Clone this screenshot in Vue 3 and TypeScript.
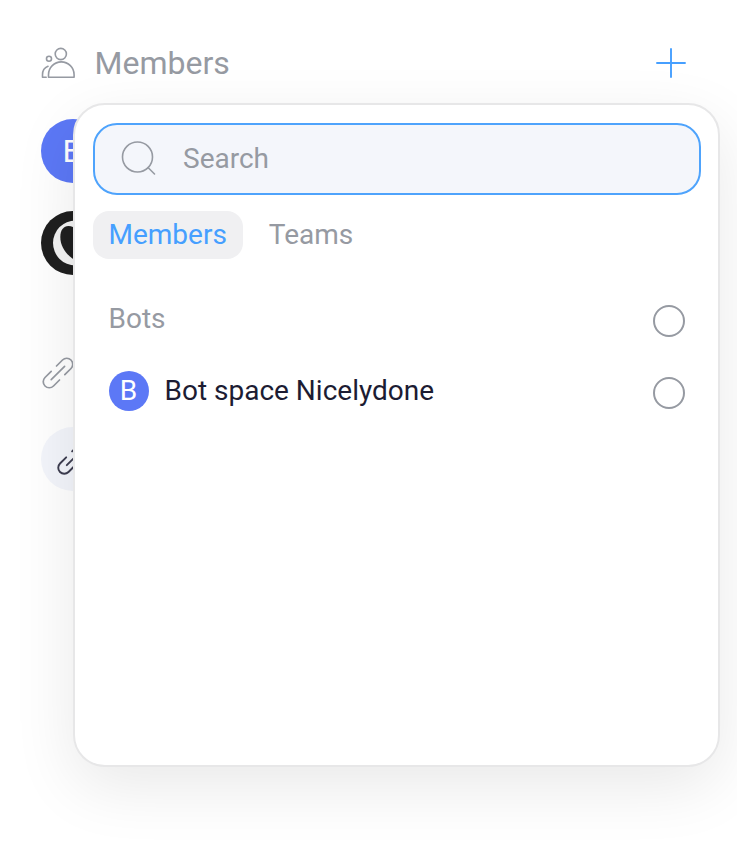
<script setup lang="ts">
import { ref } from 'vue'

type Tab = 'Members' | 'Teams'

interface Bot {
  initial: string
  name: string
}

const tabs: Tab[] = ['Members', 'Teams']
const activeTab = ref<Tab>('Members')
const query = ref('')
const bots: Bot[] = [{ initial: 'B', name: 'Bot space Nicelydone' }]
</script>

<template>
  <main class="page">
    <header class="header">
      <svg class="people" width="36" height="34" viewBox="0 0 36 34">
        <circle cx="20.8" cy="8" r="5.6" />
        <circle cx="9" cy="12.8" r="2.5" />
        <path d="M8.500 31.300v-2.600a12.800 12.800 0 0 1 25.600 0v2.600z" />
        <path d="M6.200 31.300H2.500v-2.500c0-4 2-7.200 5.500-8.500" />
      </svg>
      <h1 class="title">Members</h1>
      <button class="add" aria-label="Add">
        <svg width="30" height="30" viewBox="0 0 30 30"><path d="M15 1v28M1 15h28" /></svg>
      </button>
    </header>

    <div class="avatars">
      <span class="avatar">B</span>
      <svg class="brand" width="64" height="64" viewBox="0 0 64 64">
        <circle cx="32" cy="32" r="32" fill="#1f1f1f" />
        <circle cx="34.500" cy="32" r="22.500" fill="#f3f3f3" />
        <path d="M36 50.500C28.500 46.500 19.300 38 19.300 26c0-7 3.200-11 8.200-11 3 0 6 1.500 8.500 4z" fill="#1f1f1f" />
      </svg>
    </div>

    <div class="links">
      <svg class="link" width="36" height="36" viewBox="-18 -18 36 36">
        <path d="M-6.800-1.700-13 4.500A6 6 0 0 0-4.500 13L1.500 7M-6.800 6.600 6.600-6.600M6.800 1.700 13-4.500A6 6 0 0 0 4.500-13L-1.500-7" />
      </svg>
      <span class="link-badge">
        <svg class="link dark" width="36" height="36" viewBox="-18 -18 36 36">
          <path d="M-6.800-1.700-13 4.500A6 6 0 0 0-4.500 13L1.500 7M-6.200 6.200 6.200-6.200M6.800 1.700 13-4.500A6 6 0 0 0 4.500-13L-.900-7.600" />
        </svg>
      </span>
    </div>

    <section class="popover">
      <label class="search">
        <svg width="36" height="36" viewBox="0 0 36 36">
          <circle cx="16.500" cy="16" r="15" />
          <path d="m27 26.500 6.500 6.500" />
        </svg>
        <input v-model="query" placeholder="Search" />
      </label>
      <nav class="tabs">
        <button
          v-for="tab in tabs"
          :key="tab"
          class="tab"
          :class="{ active: tab === activeTab }"
          @click="activeTab = tab"
        >{{ tab }}</button>
      </nav>
      <div class="row group">
        <span class="label">Bots</span>
        <i class="radio"></i>
      </div>
      <div v-for="bot in bots" :key="bot.name" class="row">
        <span class="bot-avatar">{{ bot.initial }}</span>
        <span class="label">{{ bot.name }}</span>
        <i class="radio"></i>
      </div>
    </section>
  </main>
</template>

<style>
body {
  background: #fff;
}
</style>

<style scoped>
.page {
  position: relative;
  box-sizing: border-box;
  width: 737px;
  height: 846px;
  padding: 46px 52px 0 40px;
  overflow: hidden;
  font-family: Roboto, sans-serif;
  color: #969aa2;
}
button {
  padding: 0;
  border: 0;
  background: none;
  font: inherit;
  color: inherit;
}
svg {
  display: block;
  flex: none;
  fill: none;
  stroke-linecap: round;
  stroke-linejoin: round;
}
.header {
  display: flex;
  align-items: center;
  height: 34px;
}
.people {
  stroke: #969aa2;
  stroke-width: 1.6;
}
.title {
  margin: 0 auto 0 18.5px;
  font-size: 32px;
  line-height: 34px;
  font-weight: 400;
}
.add svg {
  margin-right: -0.5px;
  stroke: #469fff;
  stroke-width: 1.9;
}
.avatars {
  display: flex;
  flex-direction: column;
  gap: 28px;
  padding: 39px 0 0 0.5px;
}
.avatar {
  width: 64px;
  height: 64px;
  border-radius: 50%;
  background: #5c78f6;
  color: #fff;
  font-size: 32px;
  line-height: 64px;
  text-align: center;
}
.links {
  padding: 80px 0 0 0.5px;
}
.links > .link {
  margin-left: -0.5px;
}
.link {
  stroke: #969aa2;
  stroke-width: 1.7;
}
.link-badge {
  display: flex;
  align-items: center;
  justify-content: center;
  width: 64px;
  height: 64px;
  margin-top: 36px;
  border-radius: 50%;
  background: #f3f5fb;
}
.dark {
  stroke: #3d3d50;
  stroke-width: 1.9;
}
.popover {
  position: absolute;
  top: 103px;
  left: 73px;
  box-sizing: border-box;
  width: 647px;
  height: 664px;
  padding: 18px;
  border: 2px solid #e7e7e8;
  border-radius: 32px;
  background: #fff;
  box-shadow: 0 20px 64px rgba(0, 0, 0, 0.09);
  font-size: 28px;
}
.search {
  display: flex;
  align-items: center;
  gap: 26px;
  box-sizing: border-box;
  width: 608px;
  height: 72px;
  margin-left: -0.5px;
  padding: 0 26.5px;
  border: 2px solid #4ea3fc;
  border-radius: 24px;
  background: #f4f6fb;
}
.search svg {
  stroke: #969aa2;
  stroke-width: 1.6;
}
.search input {
  flex: 1;
  min-width: 0;
  height: 40px;
  padding: 0 0 2px;
  border: 0;
  outline: 0;
  background: none;
  font: inherit;
  color: #1c1c33;
}
.search input::placeholder {
  color: #969aa2;
  opacity: 1;
}
.tabs {
  display: flex;
  gap: 10.5px;
  margin-top: 16px;
}
.tab {
  height: 48px;
  padding: 0 16px 0 15.5px;
  border-radius: 16px;
  line-height: 48px;
}
.tab.active {
  background: #f0f0f2;
  color: #469fff;
}
.row {
  display: flex;
  align-items: center;
  gap: 16px;
  height: 72px;
  padding: 0 15.5px;
  color: #1c1c33;
}
.label {
  padding-bottom: 2px;
}
.group {
  margin-top: 24px;
  color: #969aa2;
}
.bot-avatar {
  width: 40px;
  height: 40px;
  border-radius: 50%;
  background: #5c78f6;
  color: #fff;
  line-height: 40px;
  text-align: center;
}
.radio {
  position: relative;
  top: 2px;
  box-sizing: border-box;
  width: 32px;
  height: 32px;
  margin-left: auto;
  border: 2px solid #969aa2;
  border-radius: 50%;
}
</style>
